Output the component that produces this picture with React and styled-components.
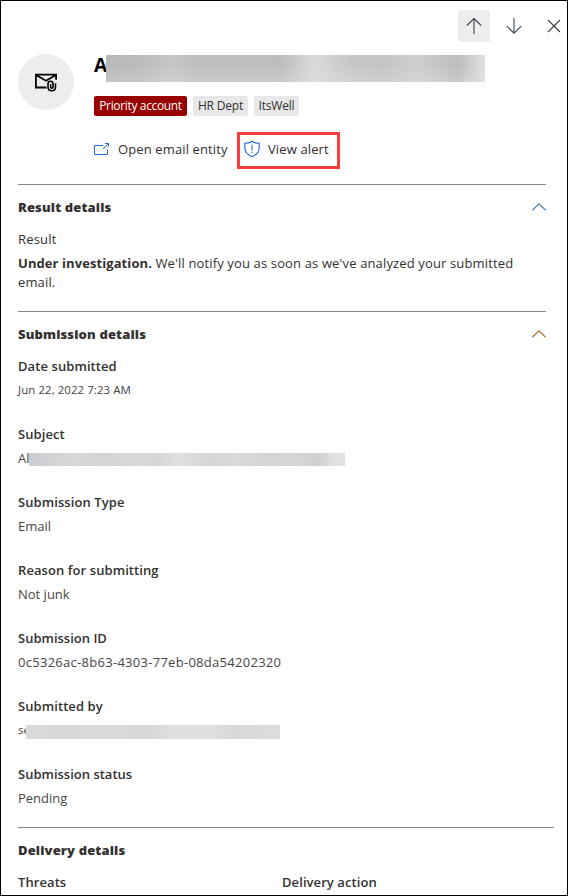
import React from "react";
import styled, { createGlobalStyle } from "styled-components";

const GlobalStyle = createGlobalStyle`
  * { box-sizing: border-box; }
  body { margin: 0; background: #fff; }
`;

const Panel = styled.main`
  width: 568px;
  height: 896px;
  overflow: hidden;
  border: 1px solid #000;
  background: #fff;
  color: #323130;
  font-family: "Open Sans", "Noto Sans", sans-serif;
  font-size: 13px;
  line-height: 20px;
  display: flex;
  flex-direction: column;
`;

const Toolbar = styled.nav`
  display: flex;
  justify-content: flex-end;
  gap: 8px;
  height: 41px;
  padding-top: 9px;
  margin-right: -3px;
  flex: none;
`;

const IconButton = styled.button`
  width: 32px;
  height: 32px;
  padding: 0;
  border: 0;
  border-radius: 2px;
  display: grid;
  place-items: center;
  background: ${(p) => (p.$active ? "#ededed" : "transparent")};
`;

const Header = styled.header`
  display: flex;
  gap: 20px;
  padding: 12px 0 0 17px;
  height: 142px;
  flex: none;
`;

const Avatar = styled.div`
  width: 56px;
  height: 56px;
  border-radius: 50%;
  background: #ededed;
  display: grid;
  place-items: center;
`;

const HeaderBody = styled.div`
  display: flex;
  flex-direction: column;
`;

const Title = styled.h1`
  margin: 1px 0 0;
  height: 27px;
  display: flex;
  font-size: 19px;
  font-weight: 700;
  line-height: 21px;
  color: #000;
`;

const Initial = styled.span`
  width: ${(p) => p.$width}px;
  white-space: nowrap;
`;

const TitleMask = styled.span`
  position: relative;
  width: 379px;
  height: 27px;
  background:
    linear-gradient(180deg, rgba(255, 255, 255, 0) 35%, rgba(238, 238, 238, 0.25) 100%),
    linear-gradient(90deg, #b8b8b8 0%, #bcbcbc 10%, #c5c7c6 17%, #bebfbf 24%, #bfbfbf 36%, #bdbdbd 46%, #d8d9d9 55%, #c5c7c6 65%, #c4c6c5 74%, #cecece 82%, #bdbdbd 93%, #e0e0e0 100%);
`;

const Tags = styled.div`
  display: flex;
  gap: 6px;
  margin-top: 14px;
`;

const Tag = styled.span`
  width: ${(p) => p.$width}px;
  height: 20px;
  border-radius: 2px;
  background: ${(p) => (p.$priority ? "#980000" : "#e8e8e8")};
  color: ${(p) => (p.$priority ? "#fff" : "#323130")};
  font-size: 12px;
  letter-spacing: ${(p) => p.$spacing || 0}px;
  line-height: 20px;
  text-align: center;
  white-space: nowrap;
`;

const Actions = styled.div`
  display: flex;
  align-items: center;
  height: 37px;
  margin-top: 16px;
`;

const Action = styled.button`
  display: flex;
  align-items: center;
  gap: 8px;
  width: ${(p) => p.$width}px;
  height: 37px;
  padding: ${(p) => (p.$highlighted ? "0 0 4px 4px" : "0 0 4px")};
  border: ${(p) => (p.$highlighted ? "3px solid #fa3e3e" : "0")};
  background: transparent;
  color: #323130;
  font: inherit;
  letter-spacing: 0.12px;
  white-space: nowrap;
`;

const Section = styled.section`
  width: ${(p) => p.$width || 528}px;
  height: ${(p) => p.$height}px;
  margin-left: 17px;
  flex: none;
  border-top: 1px solid #8a8886;
`;

const SectionHeader = styled.div`
  display: flex;
  align-items: center;
  justify-content: space-between;
  height: 20px;
  margin: 12px 0;
`;

const SectionTitle = styled.h2`
  margin: 0;
  font-size: 13px;
  font-weight: 800;
  line-height: 20px;
  letter-spacing: 0.14px;
`;

const Fields = styled.dl`
  display: flex;
  flex-direction: column;
  gap: 24px;
  margin: 0;
`;

const FieldRow = styled.dl`
  display: grid;
  grid-template-columns: 264px 1fr;
  margin: 0;
`;

const Label = styled.dt`
  font-weight: ${(p) => (p.$medium ? 500 : 600)};
  letter-spacing: ${(p) => p.$spacing ?? 0.08}px;
  white-space: nowrap;
`;

const Value = styled.dd`
  display: flex;
  align-items: center;
  height: 20px;
  margin: 4px 0 0;
  color: #484644;
  font-size: ${(p) => (p.$small ? 11.5 : 13)}px;
  letter-spacing: ${(p) => p.$spacing || 0}px;
  white-space: nowrap;
`;

const Message = styled.p`
  margin: 5px 20px 0 0;
  line-height: 19px;
  letter-spacing: 0.14px;
`;

const Strong = styled.strong`
  font-weight: 700;
  letter-spacing: 0.08px;
`;

const Mask = styled.span`
  position: relative;
  width: ${(p) => p.$width}px;
  height: ${(p) => p.$height}px;
  margin-top: 3px;
  background: ${(p) => p.$fill};
`;

const SUBJECT_FILL =
  "linear-gradient(90deg, #cacbcf 0%, #d0d1d3 6%, #d7d7d7 14%, #d4d4d4 24%, #d9d9d7 34%, #d5d6d6 41%, #e0e0e0 47%, #d4d6d7 56%, #d8dad9 65%, #d4d4d4 76%, #d6d6d6 82%, #cfd0cf 92%, #e2e2e2 97%, #e2e2e2 100%)";
const SENDER_FILL =
  "linear-gradient(90deg, #dadada 0%, #d7d7d7 15%, #dadada 30%, #d7d7d7 48%, #dfe0e0 60%, #dfe0e0 72%, #d9d8d7 83%, #dedede 100%)";

const Arrow = ({ down }) => (
  <svg width="16" height="18" viewBox="0 0 16 18" fill="none" stroke="#3d4654" strokeWidth="1.1">
    {down ? (
      <path d="M8 1v15M.8 9.2 8 16.2l7.2-7" />
    ) : (
      <path d="M8 17V1.5M.8 8.5 8 1.5l7.2 7" />
    )}
  </svg>
);

const Close = () => (
  <svg width="14" height="14" viewBox="0 0 14 14" fill="none" stroke="#3b3a39" strokeWidth="1.1">
    <path d="m1 1 12 12M13 1 1 13" />
  </svg>
);

const Chevron = ({ color }) => (
  <svg width="14" height="8" viewBox="0 0 14 8" fill="none" stroke={color} strokeWidth="1.2">
    <path d="M.4 7.2 7 .8l6.6 6.4" />
  </svg>
);

const MailAttachment = () => (
  <svg width="24" height="20" viewBox="0 0 24 20" fill="none" stroke="#000" strokeWidth="1.8">
    <path d="M12.500 15.500H1.900V2.700h20.200v5M2 3l10 5.800L22 3" />
    <path
      d="M21.500 11.300v3.700c0 5-7.500 5-7.500 0v-3.200c0-3.400 5-3.400 5 0v3.100c0 1.700-2.400 1.700-2.400 0v-3"
      strokeWidth="1.600"
    />
  </svg>
);

const OpenWindow = () => (
  <svg width="16" height="14" viewBox="0 0 16 14" fill="none" stroke="#2266d3" strokeWidth="1">
    <path d="M9 3.500H.5v9h13V7.500M9.200 6.800l5.300-5.300M11.200 1.500h3.300v3.300" />
  </svg>
);

const ShieldAlert = () => (
  <svg width="16" height="18" viewBox="0 0 16 18" fill="none" stroke="#2266d3" strokeWidth="1.100">
    <path d="M8 1.200c2 1.500 4.400 2.100 7.200 2.100V8c0 4.100-3 6.900-7.200 8.800C3.800 14.900.8 12.100.8 8V3.300C3.600 3.300 6 2.700 8 1.200Z" />
    <path d="M8 4.500v6M8 11.700v1.200" stroke="#4a6fa0" />
  </svg>
);

const Field = ({ label, labelSpacing, children, ...value }) => (
  <div>
    <Label $spacing={labelSpacing}>{label}</Label>
    <Value {...value}>{children}</Value>
  </div>
);

export default function App() {
  return (
    <>
      <GlobalStyle />
      <Panel>
        <Toolbar>
          <IconButton $active aria-label="Previous"><Arrow /></IconButton>
          <IconButton aria-label="Next"><Arrow down /></IconButton>
          <IconButton aria-label="Close"><Close /></IconButton>
        </Toolbar>

        <Header>
          <Avatar><MailAttachment /></Avatar>
          <HeaderBody>
            <Title>
              <Initial $width={12}>A</Initial>
              <TitleMask />
            </Title>
            <Tags>
              <Tag $priority $width={93} $spacing={-0.35}>Priority account</Tag>
              <Tag $width={55} $spacing={-0.2}>HR Dept</Tag>
              <Tag $width={45} $spacing={-0.2}>ItsWell</Tag>
            </Tags>
            <Actions>
              <Action $width={143}><OpenWindow />Open email entity</Action>
              <Action $width={103} $highlighted><ShieldAlert />View alert</Action>
            </Actions>
          </HeaderBody>
        </Header>

        <Section $height={127}>
          <SectionHeader>
            <SectionTitle>Result details</SectionTitle>
            <Chevron color="#4a7fae" />
          </SectionHeader>
          <Label as="div" $medium $spacing={0.2}>Result</Label>
          <Message>
            <Strong>Under investigation.</Strong> We'll notify you as soon as we've analyzed your submitted email.
          </Message>
        </Section>

        <Section $height={516}>
          <SectionHeader>
            <SectionTitle>Submission details</SectionTitle>
            <Chevron color="#a5763c" />
          </SectionHeader>
          <Fields>
            <Field label="Date submitted" $small $spacing={0.05}>Jun 22, 2022 7:23 AM</Field>
            <Field label="Subject">
              <Initial $width={11}>Al</Initial>
              <Mask $width={316} $height={13} $fill={SUBJECT_FILL} />
            </Field>
            <Field label="Submission Type">Email</Field>
            <Field label="Reason for submitting">Not junk</Field>
            <Field label="Submission ID" labelSpacing={0} $spacing={0.28}>
              0c5326ac-8b63-4303-77eb-08da54202320
            </Field>
            <Field label="Submitted by" $small>
              <Initial $width={8}>se</Initial>
              <Mask $width={254} $height={14} $fill={SENDER_FILL} />
            </Field>
            <Field label="Submission status" labelSpacing={0}>Pending</Field>
          </Fields>
        </Section>

        <Section $height={69} $width={536}>
          <SectionHeader>
            <SectionTitle>Delivery details</SectionTitle>
          </SectionHeader>
          <FieldRow>
            <Label>Threats</Label>
            <Label>Delivery action</Label>
          </FieldRow>
        </Section>
      </Panel>
    </>
  );
}
